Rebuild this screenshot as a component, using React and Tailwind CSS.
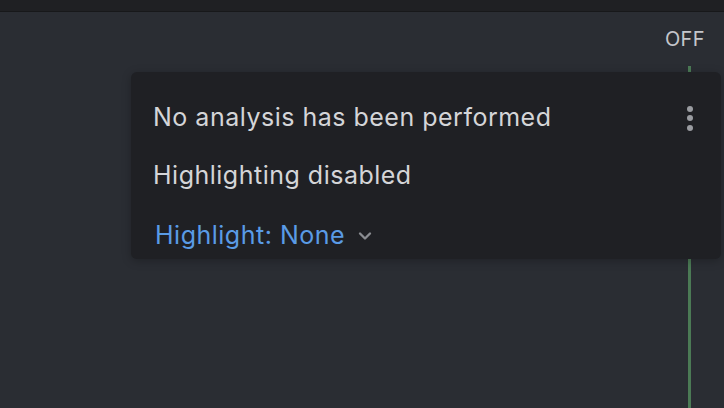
import React from 'react';
import { ChevronDown } from 'lucide-react';

const App = () => {
  return (
    <div
      className="relative w-[724px] h-[408px] overflow-hidden bg-[#2a2d33]"
      style={{ fontFamily: 'Inter, "Noto Sans", sans-serif' }}
    >
      {/* Top bar */}
      <div className="h-[12px] bg-[#1f2023] border-b border-[#17181a]" />

      {/* Status label */}
      <div className="flex justify-end pr-[19px] pt-[15px]">
        <span className="text-[20px] leading-[24px] text-[#c4c6cb] tracking-[0.4px]">OFF</span>
      </div>

      {/* Green gutter line */}
      <div className="absolute left-[688px] top-[66px] bottom-0 w-[3px] bg-[#4b7a55]" />

      {/* Popup */}
      <div className="absolute left-[131px] top-[72px] w-[590px] h-[187px] rounded-[6px] bg-[#1f2024] shadow-[0_2px_10px_rgba(0,0,0,0.25)] pl-[22px] pr-[28px] pt-[31px] text-[25px] tracking-[0.5px]">
        <div className="flex items-center justify-between h-[30px]">
          <span className="text-[#d4d5d8]">No analysis has been performed</span>
          <div className="flex flex-col gap-[3.5px] items-center">
            <span className="w-[6px] h-[6px] rounded-full bg-[#9a9ca1]" />
            <span className="w-[6px] h-[6px] rounded-full bg-[#9a9ca1]" />
            <span className="w-[6px] h-[6px] rounded-full bg-[#9a9ca1]" />
          </div>
        </div>
        <div className="flex items-center h-[30px] mt-[28px]">
          <span className="text-[#d4d5d8]">Highlighting disabled</span>
        </div>
        <div className="flex items-center h-[30px] mt-[30px] pl-[2px] gap-[10px]">
          <span className="text-[#5a9be6]">Highlight: None</span>
          <ChevronDown className="w-[20px] h-[20px] text-[#8a8c91]" strokeWidth={2.8} />
        </div>
      </div>
    </div>
  );
};

export default App;
